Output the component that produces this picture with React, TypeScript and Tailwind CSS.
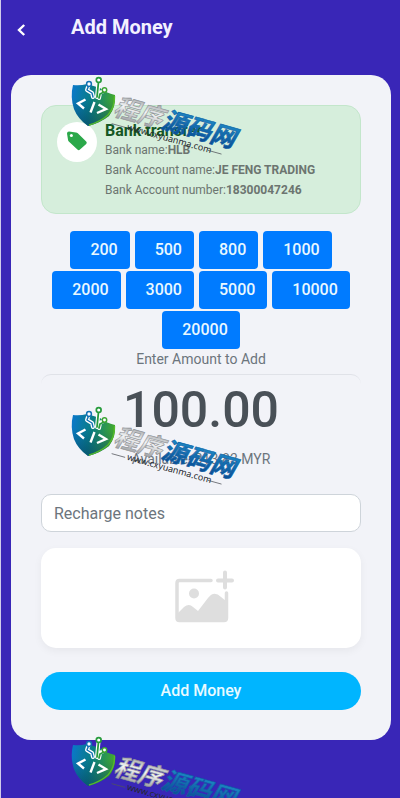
import { useState } from "react";

const AMOUNTS = [200, 500, 800, 1000, 2000, 3000, 5000, 10000, 20000];

const BANK_DETAILS = [
  { label: "Bank name:", value: "HLB" },
  { label: "Bank Account name:", value: "JE FENG TRADING" },
  { label: "Bank Account number:", value: "18300047246" },
];

function ChevronLeft() {
  return (
    <svg viewBox="0 0 10 14" className="h-[14px] w-[10px]" fill="none" stroke="#fff" strokeWidth="2.4">
      <path d="M8.2 2 L3 7 L8.2 12" />
    </svg>
  );
}

function TagIcon() {
  return (
    <svg viewBox="0 0 24 24" className="h-6 w-6">
      <path
        fill="#2ba84a"
        d="M2 3.4 Q2 1.4 4 1.4 L11 2.4 Q12 2.5 12.8 3.3 L21.2 11.4 Q22.4 12.6 21.2 13.9 L15 19.6 Q13.7 20.8 12.4 19.6 L3.8 11.6 Q3.1 10.8 3 9.8 Z"
      />
      <circle cx="6.4" cy="5.6" r="1.5" fill="#fff" />
    </svg>
  );
}

function AddImageIcon() {
  return (
    <svg viewBox="-8 0 68 58" className="h-[58px] w-[68px]" fill="#dedede">
      <path
        d="M36 11.5 H4.5 Q2 11.5 2 14 V49 Q2 51.5 4.5 51.5 H49 Q51.5 51.5 51.5 49 V24"
        fill="none"
        stroke="#dedede"
        strokeWidth="3.5"
        strokeLinecap="round"
      />
      <circle cx="19" cy="24.5" r="5" />
      <path d="M3 44 L9 38 Q14 34 18 38 L23 42 L33 29 Q39 21 46 28 L51 32 V51 H3 Z" />
      <path d="M50 3.5 V18.5 M43 11.5 H57" stroke="#dedede" strokeWidth="4" strokeLinecap="round" />
    </svg>
  );
}

function Watermark({ id }: { id: string }) {
  const shield = "M7 11 Q14 12 21 10 L34 14 Q40 19 49 21 Q50 33 43 42 Q34 49 22 52 Q12 45 8 35 Q4 23 7 11 Z";

  return (
    <svg viewBox="0 0 180 96" className="h-24 w-[180px]">
      <defs>
        <linearGradient id={`${id}-shield`} x1="0" y1="0.3" x2="1" y2="0.5">
          <stop offset="0" stopColor="#0a78c6" />
          <stop offset="0.45" stopColor="#087d83" />
          <stop offset="1" stopColor="#49ad25" />
        </linearGradient>
        <linearGradient id={`${id}-dark`} x1="0" y1="0" x2="0" y2="1">
          <stop offset="0.35" stopColor="#063e78" stopOpacity="0" />
          <stop offset="1" stopColor="#063e66" stopOpacity="0.6" />
        </linearGradient>
        <linearGradient id={`${id}-silver`} x1="0" y1="0" x2="0" y2="1">
          <stop offset="0.1" stopColor="#8f9296" />
          <stop offset="0.5" stopColor="#f3f4f5" />
          <stop offset="0.9" stopColor="#999ca0" />
        </linearGradient>
        <linearGradient id={`${id}-blue`} x1="0" y1="0" x2="0" y2="1">
          <stop offset="0.1" stopColor="#1f91cc" />
          <stop offset="0.9" stopColor="#0a4a92" />
        </linearGradient>
      </defs>
      <path d={shield} fill={`url(#${id}-shield)`} />
      <path d={shield} fill={`url(#${id}-dark)`} />
      <path d="M48.5 22 Q49 33 42 41 Q34 48 23 51" fill="none" stroke="#55b92c" strokeWidth="1.4" />
      <g fill="none" strokeLinecap="round" strokeLinejoin="round">
        <path d="M23 10 L21 16 L26 19 L27 23 M32.7 6 L31 23 M39 16 L34 19 L33 24" stroke="#fff" strokeWidth="4" />
        <path d="M22.5 12 L21 16 L26 19 L27 23" stroke="#0f70b3" strokeWidth="1.4" />
        <path d="M32.5 8 L31 23 M38 18 L34 20 L33 24" stroke="#279b3c" strokeWidth="1.8" />
        <circle cx="23" cy="10" r="2.4" fill="#fff" stroke="#0f70b3" strokeWidth="1.5" />
        <circle cx="32.7" cy="6" r="2.4" fill="#fff" stroke="#279b3c" strokeWidth="1.7" />
        <circle cx="38.5" cy="16" r="2.2" fill="#fff" stroke="#3ba532" strokeWidth="1.5" />
      </g>
      <path
        d="M19.5 25.5 L12 29.5 L18 34.5 M28.5 28 L24.5 38.5 M32.5 30.5 L40 35 L31 39"
        fill="none"
        stroke="#fff"
        strokeWidth="2.4"
      />
      <g transform="translate(45 37) rotate(15.5)">
        <text
          x="2"
          y="3"
          fontSize="25"
          fontWeight="700"
          fontStyle="italic"
          strokeWidth="0.6"
          fontFamily="'Noto Sans CJK SC', sans-serif"
        >
          <tspan fill={`url(#${id}-silver)`} stroke="#8f9296">程序</tspan>
          <tspan fill={`url(#${id}-blue)`} stroke="#0d5fa5">源码网</tspan>
        </text>
        <path d="M4 12 H18 M104 12 H118" stroke="#51545a" strokeWidth="0.7" />
        <text x="20" y="14" fontSize="9" fill="#25282d" fontFamily="'Noto Sans', sans-serif">
          www.cxyuanma.com
        </text>
      </g>
    </svg>
  );
}

export default function App() {
  const [amount, setAmount] = useState("100.00");
  const [notes, setNotes] = useState("");

  return (
    <div className="relative min-h-screen overflow-hidden border-l border-[#cfcbea] bg-[#3926b7] font-[Roboto,sans-serif]">
      <header className="flex h-[75px] items-start pt-3 pl-[15px]">
        <button type="button" aria-label="Back" className="flex h-9 w-[55px] items-center">
          <ChevronLeft />
        </button>
        <h1 className="text-[20px] leading-[30px] font-bold text-[#f3f1ff]">Add Money</h1>
      </header>

      <main className="mr-[9px] ml-[10px] rounded-[20px] bg-[#f2f3f8] p-[30px]">
        <section className="flex gap-2 rounded-[15px] border border-[#c3e6cb] bg-[#d6eedc] px-[15px] pt-4 pb-[13px]">
          <div className="flex h-10 w-10 shrink-0 items-center justify-center rounded-full bg-white">
            <TagIcon />
          </div>
          <div>
            <h2 className="text-[16px] leading-[18px] font-bold text-[#155724]">Bank transfer</h2>
            {BANK_DETAILS.map((item) => (
              <p key={item.label} className="text-[12px] leading-5 text-[#6c7570]">
                {item.label}
                <strong className="font-bold">{item.value}</strong>
              </p>
            ))}
          </div>
        </section>

        <div className="mt-[17px] flex flex-wrap justify-center gap-x-[5px] gap-y-[2px]">
          {AMOUNTS.map((value) => (
            <button
              key={value}
              type="button"
              onClick={() => setAmount(value.toFixed(2))}
              className="h-[38px] rounded-[4px] bg-[#007bff] pr-3 pl-5 text-[16px] font-medium text-[#e9f8ff]"
            >
              {value}
            </button>
          ))}
        </div>

        <label htmlFor="amount" className="block text-center text-[14px] leading-5 text-[#6c757d]">
          Enter Amount to Add
        </label>
        <input
          id="amount"
          value={amount}
          onChange={(e) => setAmount(e.target.value)}
          className="mt-[5px] block h-[72px] w-full rounded-[10px] border-t border-[#e0e2e8] text-center text-[50px] font-medium text-[#495057] outline-none"
        />
        <p className="mt-[3px] text-center text-[14px] leading-5 text-[#6c757d]">Available: 313.83 MYR</p>

        <input
          aria-label="Recharge notes"
          placeholder="Recharge notes"
          value={notes}
          onChange={(e) => setNotes(e.target.value)}
          className="mt-[25px] block h-[38px] w-full rounded-[10px] border border-[#ced4da] bg-white px-3 text-[16px] text-[#495057] outline-none placeholder:text-[#6c757d]"
        />

        <button
          type="button"
          aria-label="Upload receipt"
          className="mt-4 flex h-[100px] w-full items-center justify-center rounded-[15px] bg-white shadow-[0_3px_8px_rgba(0,0,0,0.05)]"
        >
          <AddImageIcon />
        </button>

        <button
          type="button"
          className="mt-6 h-[38px] w-full rounded-full bg-[#00b5ff] text-[16px] font-medium text-[#e9faff]"
        >
          Add Money
        </button>
      </main>

      <div aria-hidden="true" className="pointer-events-none absolute top-[74px] left-[65px] flex flex-col gap-[234px]">
        <Watermark id="wm1" />
        <Watermark id="wm2" />
        <Watermark id="wm3" />
      </div>
    </div>
  );
}
